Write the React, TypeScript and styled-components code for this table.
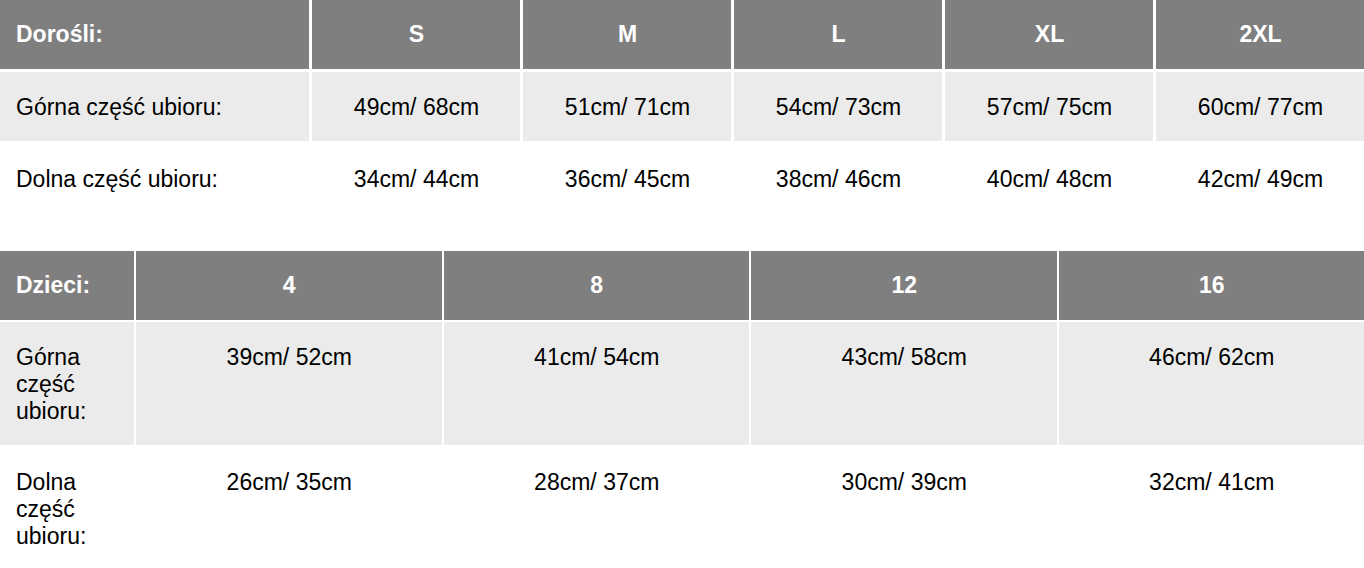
import { createGlobalStyle } from 'styled-components';
import styled from 'styled-components';

const GlobalStyle = createGlobalStyle`
  html, body {
    margin: 0;
    padding: 0;
    background: #ffffff;
  }
  body {
    font-family: "Liberation Sans", Arial, sans-serif;
    color: #000000;
  }
`;

const Page = styled.div`
  display: flex;
  flex-direction: column;
  gap: 38px;
  width: 1364px;
`;

const Grid = styled.div<{ $first: number; $cols: number; $gap: number }>`
  display: grid;
  grid-template-columns: ${({ $first, $cols }) => `${$first}px repeat(${$cols}, 1fr)`};
  gap: ${({ $gap }) => $gap}px;
`;

const Cell = styled.div<{ $kind: 'head' | 'shade' | 'plain'; $label?: boolean }>`
  padding: ${({ $kind }) => ($kind === 'head' ? '21px 15px 21px 16px' : '22px 15px 20px 16px')};
  font-size: 23px;
  line-height: 27px;
  text-align: ${({ $label }) => ($label ? 'left' : 'center')};
  font-weight: ${({ $kind }) => ($kind === 'head' ? 700 : 400)};
  color: ${({ $kind }) => ($kind === 'head' ? '#ffffff' : '#000000')};
  background: ${({ $kind }) =>
    $kind === 'head' ? '#7f7f7f' : $kind === 'shade' ? '#ebebeb' : '#ffffff'};
`;

type Row = { label: string; values: string[] };

type SizeTable = {
  title: string;
  first: number;
  gap: number;
  sizes: string[];
  rows: Row[];
};

const tables: SizeTable[] = [
  {
    title: 'Dorośli:',
    first: 309,
    gap: 3,
    sizes: ['S', 'M', 'L', 'XL', '2XL'],
    rows: [
      {
        label: 'Górna część ubioru:',
        values: ['49cm/ 68cm', '51cm/ 71cm', '54cm/ 73cm', '57cm/ 75cm', '60cm/ 77cm'],
      },
      {
        label: 'Dolna część ubioru:',
        values: ['34cm/ 44cm', '36cm/ 45cm', '38cm/ 46cm', '40cm/ 48cm', '42cm/ 49cm'],
      },
    ],
  },
  {
    title: 'Dzieci:',
    first: 134,
    gap: 2,
    sizes: ['4', '8', '12', '16'],
    rows: [
      {
        label: 'Górna część ubioru:',
        values: ['39cm/ 52cm', '41cm/ 54cm', '43cm/ 58cm', '46cm/ 62cm'],
      },
      {
        label: 'Dolna część ubioru:',
        values: ['26cm/ 35cm', '28cm/ 37cm', '30cm/ 39cm', '32cm/ 41cm'],
      },
    ],
  },
];

export default function App() {
  return (
    <>
      <GlobalStyle />
      <Page>
        {tables.map((t) => (
          <Grid key={t.title} $first={t.first} $cols={t.sizes.length} $gap={t.gap}>
            <Cell $kind="head" $label>
              {t.title}
            </Cell>
            {t.sizes.map((s) => (
              <Cell key={s} $kind="head">
                {s}
              </Cell>
            ))}
            {t.rows.map((row, i) => {
              const kind = i % 2 === 0 ? 'shade' : 'plain';
              return [
                <Cell key={`${row.label}-l`} $kind={kind} $label>
                  {row.label}
                </Cell>,
                ...row.values.map((v, j) => (
                  <Cell key={`${row.label}-${j}`} $kind={kind}>
                    {v}
                  </Cell>
                )),
              ];
            })}
          </Grid>
        ))}
      </Page>
    </>
  );
}
